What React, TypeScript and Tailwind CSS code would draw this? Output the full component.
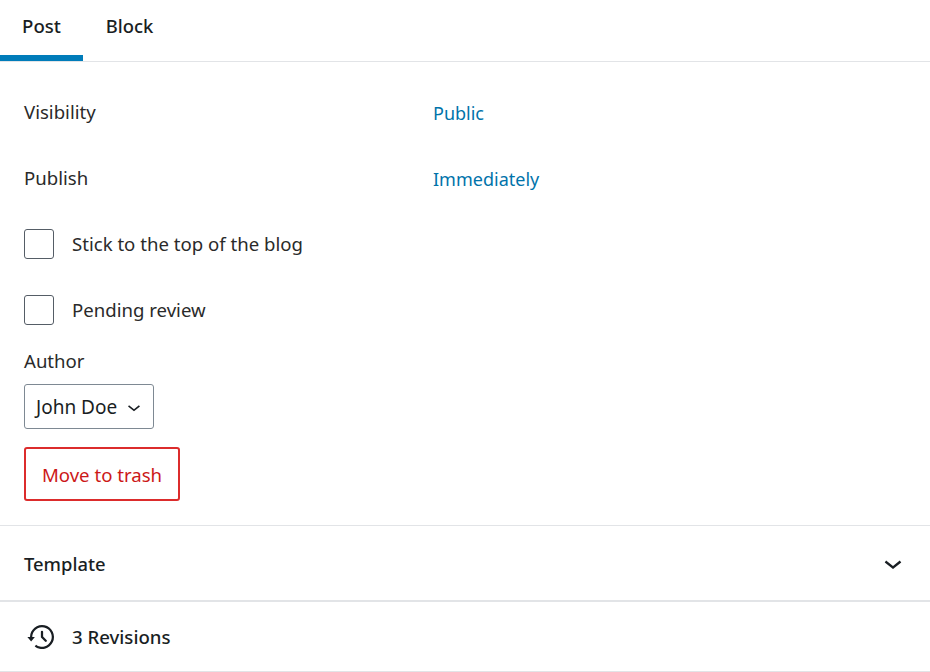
const font = "font-['Noto_Sans',sans-serif]";

function Check({ label }: { label: string }) {
  return (
    <label className="flex h-[66px] items-center gap-[18px]">
      <span className="h-[30px] w-[30px] rounded-[3px] border border-[#555d66] bg-white" />
      <span className="text-[18.6px] text-[#2a2a2a]">{label}</span>
    </label>
  );
}

function Chevron({ size }: { size: number }) {
  return (
    <svg width={size} height={size} viewBox="0 0 24 24" fill="#191e23">
      <path d="M17.5 11.6L12 16l-5.5-4.4.9-1.2L12 14l4.5-3.6 1 1.2z" />
    </svg>
  );
}

export default function App() {
  return (
    <div className={`h-[672px] w-[930px] overflow-hidden bg-white ${font}`}>
      <div className="flex h-[62px] border-b border-[#e2e4e7]">
        <div className="flex h-[61px] w-[83px] items-center justify-center border-b-[6px] border-[#007cba] pb-[3px] text-[18.6px] font-medium text-[#191e23]">
          Post
        </div>
        <div className="flex h-[60px] w-[93px] items-center justify-center pb-[8px] text-[18.4px] font-medium text-[#191e23]">
          Block
        </div>
      </div>

      <div className="px-6 pt-[17px]">
        <div className="flex h-[66px] items-center text-[18.6px]">
          <span className="w-[409px] text-[#2a2a2a]">Visibility</span>
          <a className="pt-[2px] text-[18px] text-[#0073aa]">Public</a>
        </div>
        <div className="flex h-[66px] items-center text-[18.6px]">
          <span className="w-[409px] text-[#2a2a2a]">Publish</span>
          <a className="pt-[2px] text-[18px] text-[#0073aa]">Immediately</a>
        </div>
        <Check label="Stick to the top of the blog" />
        <Check label="Pending review" />
        <div className="pt-[5px] text-[18.6px] leading-[26px] text-[#2a2a2a]">Author</div>
        <div className="mt-[10px] flex h-[45px] w-[130px] items-center justify-between rounded-[3px] border border-[#7e8993] pl-[11px] pr-[6px] text-[19px] text-[#191e23]">
          <span className="pt-[1px]">John Doe</span>
          <Chevron size={26} />
        </div>
        <button className="mt-[18px] flex h-[54px] w-[156px] items-center justify-center rounded-[3px] border-2 border-[#dc2c2c] pt-[1px] text-[18.6px] text-[#cc1818]">
          Move to trash
        </button>
      </div>

      <div className="mt-[24px] flex h-[77px] items-center justify-between border-t border-b-2 border-[#e2e4e7] pl-6 pr-[19px]">
        <span className="pt-[1px] text-[18.4px] font-medium text-[#191e23]">Template</span>
        <Chevron size={36} />
      </div>

      <div className="flex h-[70px] items-center gap-3 border-b border-[#e2e4e7] pl-6">
        <svg width="36" height="36" viewBox="0 0 24 24" fill="#191e23">
          <path d="M5.5 12h1.75l-2.5 3-2.5-3H4a8 8 0 113.134 6.35l.907-1.194A6.5 6.5 0 105.5 12zm9.53 1.97l-2.28-2.28V8.5a.75.75 0 00-1.5 0V12c0 .199.079.39.22.53l2.5 2.5a.75.75 0 101.06-1.06z" />
        </svg>
        <span className="text-[18.6px] font-medium text-[#191e23]">3 Revisions</span>
      </div>
    </div>
  );
}
